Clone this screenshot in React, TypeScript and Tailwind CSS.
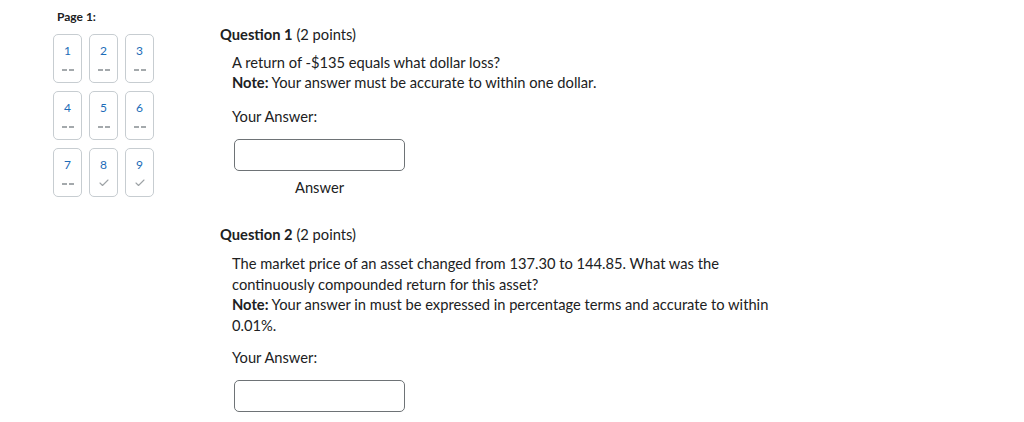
import { Check } from "lucide-react";

type Tile = { n: number; answered: boolean };

const tiles: Tile[] = [
  { n: 1, answered: false },
  { n: 2, answered: false },
  { n: 3, answered: false },
  { n: 4, answered: false },
  { n: 5, answered: false },
  { n: 6, answered: false },
  { n: 7, answered: false },
  { n: 8, answered: true },
  { n: 9, answered: true },
];

function QuestionTile({ tile }: { tile: Tile }) {
  return (
    <div className="flex h-[49px] w-[29px] flex-col items-center rounded-[5px] border border-[#c7cdd1] bg-white pt-[8px]">
      <span className="text-[12px] leading-[16px] text-[#1c6cb8]">{tile.n}</span>
      {tile.answered ? (
        <Check className="mt-[4px] h-[12px] w-[12px] text-[#9ea3a6]" strokeWidth={2.2} />
      ) : (
        <div className="mt-[10px] flex gap-[2px]">
          <span className="h-[1.5px] w-[5px] bg-[#a4a9ac]" />
          <span className="h-[1.5px] w-[5px] bg-[#a4a9ac]" />
        </div>
      )}
    </div>
  );
}

function AnswerBox() {
  return <div className="h-[32px] w-[171px] rounded-[5px] border border-[#6e7376] bg-white" />;
}

export default function App() {
  return (
    <div
      className="flex min-h-[422px] w-[1024px] bg-white text-[14.7px] text-[#202122]"
      style={{ fontFamily: "Lato, 'Noto Sans', sans-serif" }}
    >
      {/* question navigator */}
      <div className="w-[220px] shrink-0 pl-[53px] pt-[9px]">
        <div className="pl-[4px] text-[12px] font-bold leading-[16px] text-[#202122]">Page 1:</div>
        <div className="mt-[9px] grid w-[101px] grid-cols-3 gap-x-[7px] gap-y-[8px]">
          {tiles.map((t) => (
            <QuestionTile key={t.n} tile={t} />
          ))}
        </div>
      </div>

      {/* questions */}
      <div className="flex-1 pt-[24px]">
        <div className="leading-[20px]">
          <span className="font-bold">Question 1</span> (2 points)
        </div>
        <div className="pl-[12px] pt-[8px]">
          <p className="leading-[20px]">A return of -$135 equals what dollar loss?</p>
          <p className="leading-[20px]">
            <span className="font-bold">Note:</span> Your answer must be accurate to within one dollar.
          </p>
          <div className="mt-[14px] leading-[20px]">Your Answer:</div>
          <div className="mt-[13px] pl-[2px]">
            <AnswerBox />
            <div className="mt-[6px] w-[171px] text-center leading-[20px]">Answer</div>
          </div>
        </div>

        <div className="mt-[27px] leading-[20px]">
          <span className="font-bold">Question 2</span> (2 points)
        </div>
        <div className="pl-[12px] pt-[9px]">
          <p className="max-w-[550px] leading-[20.5px]">
            The market price of an asset changed from 137.30 to 144.85. What was the continuously
            compounded return for this asset?
            <br />
            <span className="font-bold">Note:</span> Your answer in must be expressed in percentage terms and
            accurate to within 0.01%.
          </p>
          <div className="mt-[12px] leading-[20px]">Your Answer:</div>
          <div className="mt-[13px] pl-[2px]">
            <AnswerBox />
          </div>
        </div>
      </div>
    </div>
  );
}
